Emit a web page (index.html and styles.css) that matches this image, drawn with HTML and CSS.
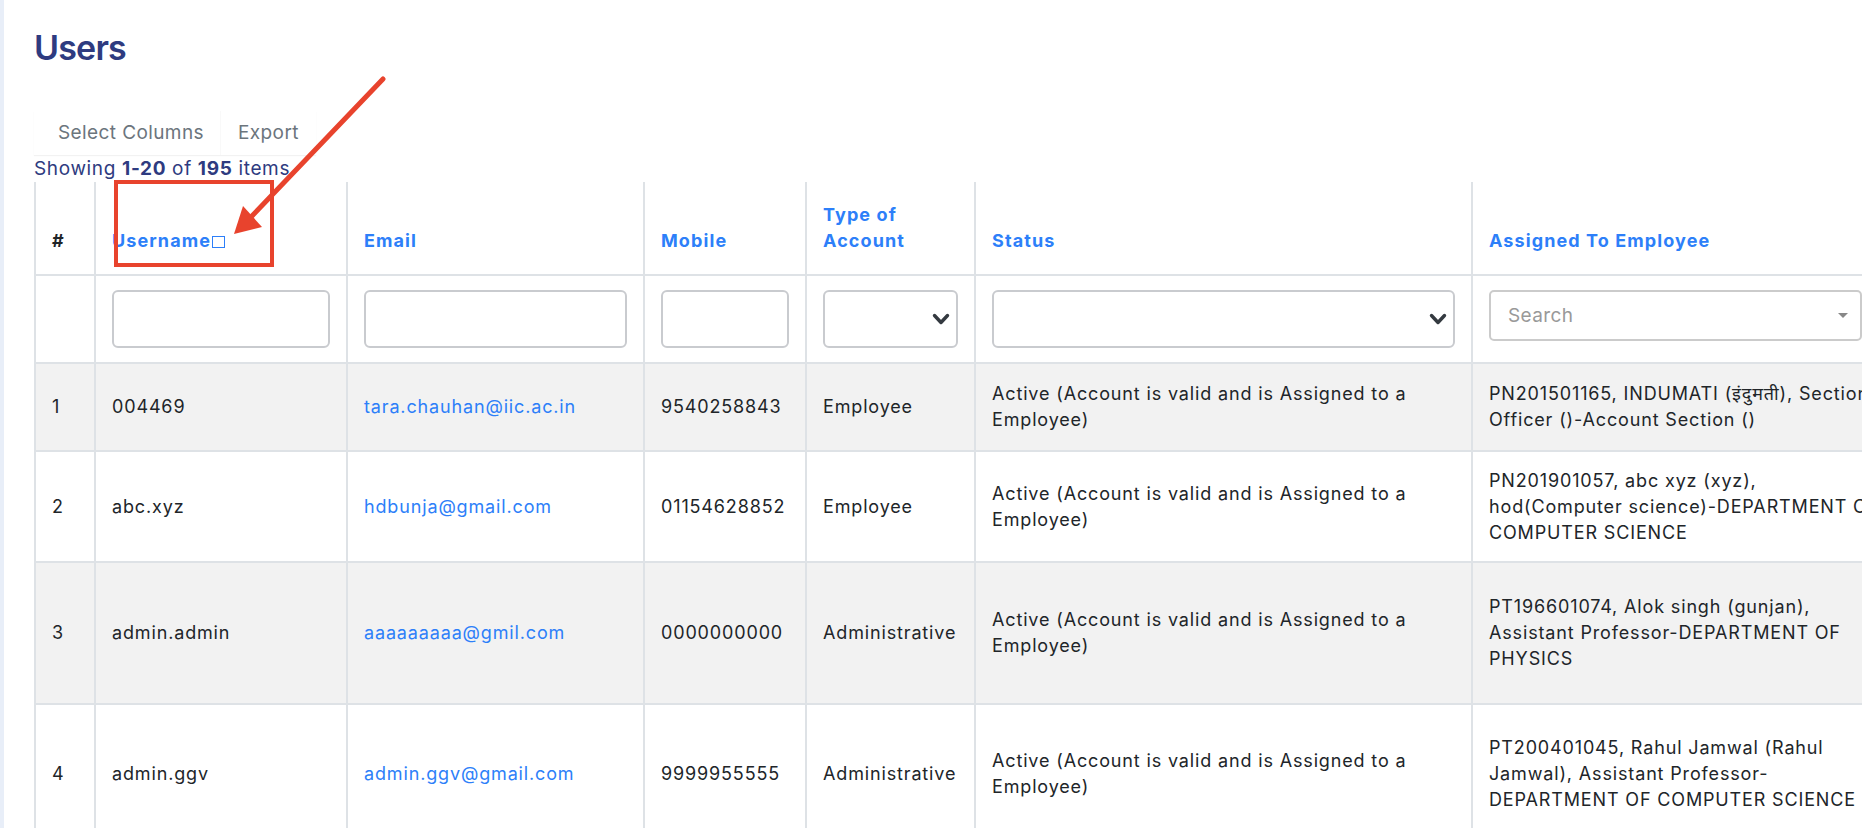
FILE: index.html
```html
<!DOCTYPE html>
<html lang="en">
<head>
<meta charset="utf-8">
<title>Users</title>
<link rel="stylesheet" href="styles.css">
</head>
<body>
<div class="layout">
  <aside class="rail"></aside>
  <main class="main">
    <h1 class="title">Users</h1>
    <div class="toolbar">
      <div class="btn-group">
        <button class="tool-btn" type="button">Select Columns</button>
        <button class="tool-btn" type="button">Export</button>
      </div>
    </div>
    <div class="summary">Showing <b>1-20</b> of <b>195</b> items.</div>
    <div class="table-wrap">
      <table class="grid">
        <thead>
          <tr class="head-row">
            <th class="c-num">#</th>
            <th class="c-user"><a class="sort">Username<span class="tofu"></span></a></th>
            <th class="c-email"><a class="sort">Email</a></th>
            <th class="c-mobile"><a class="sort">Mobile</a></th>
            <th class="c-type"><a class="sort">Type of Account</a></th>
            <th class="c-status"><a class="sort">Status</a></th>
            <th class="c-assigned"><a class="sort">Assigned To Employee</a></th>
          </tr>
          <tr class="filter-row">
            <td></td>
            <td><input class="field" type="text"></td>
            <td><input class="field" type="text"></td>
            <td><input class="field" type="text"></td>
            <td><div class="field select"><svg class="chev" viewBox="0 0 18 12" width="18" height="12"><path d="M2.5 2.5l6.5 7 6.5-7" fill="none" stroke="#343a40" stroke-width="3.4" stroke-linecap="round" stroke-linejoin="round"/></svg></div></td>
            <td><div class="field select"><svg class="chev" viewBox="0 0 18 12" width="18" height="12"><path d="M2.5 2.5l6.5 7 6.5-7" fill="none" stroke="#343a40" stroke-width="3.4" stroke-linecap="round" stroke-linejoin="round"/></svg></div></td>
            <td><div class="search-box"><span class="placeholder">Search</span><span class="caret"></span></div></td>
          </tr>
        </thead>
        <tbody>
          <tr class="row-1 striped">
            <td>1</td>
            <td>004469</td>
            <td><a class="mail">tara.chauhan@iic.ac.in</a></td>
            <td>9540258843</td>
            <td>Employee</td>
            <td>Active (Account is valid and is Assigned to a Employee)</td>
            <td class="assigned">PN201501165, INDUMATI (इंदुमती), Section<br>Officer ()-Account Section ()</td>
          </tr>
          <tr class="row-2">
            <td>2</td>
            <td>abc.xyz</td>
            <td><a class="mail">hdbunja@gmail.com</a></td>
            <td>01154628852</td>
            <td>Employee</td>
            <td>Active (Account is valid and is Assigned to a Employee)</td>
            <td class="assigned">PN201901057, abc xyz (xyz),<br>hod(Computer science)-DEPARTMENT OF<br>COMPUTER SCIENCE</td>
          </tr>
          <tr class="row-3 striped">
            <td>3</td>
            <td>admin.admin</td>
            <td><a class="mail">aaaaaaaaa@gmil.com</a></td>
            <td>0000000000</td>
            <td>Administrative</td>
            <td>Active (Account is valid and is Assigned to a Employee)</td>
            <td class="assigned">PT196601074, Alok singh (gunjan),<br>Assistant Professor-DEPARTMENT OF<br>PHYSICS</td>
          </tr>
          <tr class="row-4">
            <td>4</td>
            <td>admin.ggv</td>
            <td><a class="mail">admin.ggv@gmail.com</a></td>
            <td>9999955555</td>
            <td>Administrative</td>
            <td>Active (Account is valid and is Assigned to a Employee)</td>
            <td class="assigned">PT200401045, Rahul Jamwal (Rahul<br>Jamwal), Assistant Professor-<br>DEPARTMENT OF COMPUTER SCIENCE</td>
          </tr>
        </tbody>
      </table>
    </div>
  </main>
</div>
<svg class="annotation" width="1862" height="828" viewBox="0 0 1862 828">
  <rect x="116" y="182" width="156" height="83" fill="none" stroke="#e8432d" stroke-width="4"/>
  <line x1="383" y1="79" x2="252" y2="216" stroke="#e8432d" stroke-width="5" stroke-linecap="round"/>
  <polygon points="234,234 243,206 262,227" fill="#e8432d"/>
</svg>
</body>
</html>
```

FILE: styles.css
```css
* { box-sizing: border-box; }

html, body {
  margin: 0;
  padding: 0;
  background: #ffffff;
  overflow: hidden;
}

body {
  font-family: Inter, "Noto Sans", "Liberation Sans", sans-serif;
  font-size: 18px;
  letter-spacing: 0.75px;
  color: #212529;
  width: 1862px;
  height: 828px;
}

.layout {
  display: flex;
  height: 828px;
}

.rail {
  flex: 0 0 4px;
  background: #e8eef8;
}

.main {
  flex: 1 1 auto;
  min-width: 0;
  padding: 25px 0 0 30px;
  overflow: hidden;
}

.title {
  margin: 0;
  font-size: 34px;
  line-height: 46px;
  font-weight: 600;
  color: #2e3b80;
  letter-spacing: -0.8px;
}

.toolbar {
  margin-top: 40px;
  display: flex;
}

.btn-group {
  display: flex;
  box-shadow: 0 1px 1px rgba(0, 0, 0, 0.05);
  padding-left: 7px;
}

.tool-btn {
  font-family: inherit;
  font-size: 19px;
  letter-spacing: 0.4px;
  color: #6c757d;
  background: transparent;
  border: 0;
  padding: 0 17px;
  height: 44px;
  line-height: 44px;
}

.tool-btn + .tool-btn {
  box-shadow: -1px 0 0 rgba(0, 0, 0, 0.025);
}

.summary {
  font-size: 19px;
  letter-spacing: 0.65px;
  line-height: 27px;
  color: #2e3b80;
}

.summary b {
  font-weight: 700;
}

.table-wrap {
  overflow: hidden;
}

.grid {
  border-collapse: separate;
  border-spacing: 0;
  table-layout: fixed;
  width: 1846px;
}

.grid th,
.grid td {
  border-right: 2px solid #dee2e6;
  border-bottom: 2px solid #dee2e6;
  padding: 0 16px;
  line-height: 26px;
  text-align: left;
  white-space: normal;
  overflow: hidden;
}

.grid tr > :first-child {
  border-left: 2px solid #dee2e6;
}

.c-num { width: 62px; }
.c-user { width: 252px; }
.c-email { width: 297px; }
.c-mobile { width: 162px; }
.c-type { width: 169px; }
.c-status { width: 497px; }
.c-assigned { width: 407px; }

.head-row { height: 94px; }

.head-row th {
  vertical-align: bottom;
  padding-bottom: 20px;
  font-weight: 700;
  letter-spacing: 1.1px;
  color: #212529;
}

.sort {
  color: #2d7ff9;
  text-decoration: none;
}

.tofu {
  display: inline-block;
  width: 13px;
  height: 12px;
  border: 1.5px solid #2d7ff9;
  margin-left: 1px;
  vertical-align: -1px;
}

.filter-row { height: 88px; }

.filter-row td {
  vertical-align: top;
  padding-top: 14px;
}

.field {
  display: block;
  width: 100%;
  height: 58px;
  border: 2px solid #c9cbcf;
  border-radius: 6px;
  background: #fff;
  font-family: inherit;
  font-size: 18px;
}

.select {
  display: flex;
  align-items: center;
  justify-content: flex-end;
  padding-right: 6px;
}

.chev {
  display: block;
}

.search-box {
  display: flex;
  align-items: center;
  justify-content: space-between;
  height: 51px;
  border: 2px solid #cbcbcb;
  border-radius: 5px;
  padding: 0 12px 0 17px;
  white-space: nowrap;
}

.placeholder {
  color: #999999;
  font-size: 19px;
  letter-spacing: 0.4px;
}

.caret {
  width: 0;
  height: 0;
  border-left: 5px solid transparent;
  border-right: 5px solid transparent;
  border-top: 5px solid #888888;
}

tbody td {
  vertical-align: middle;
  letter-spacing: 0.85px;
}

.striped td { background: #f2f2f2; }

.row-1 { height: 88px; }
.row-2 { height: 111px; }
.row-3 { height: 142px; }
.row-4 { height: 140px; }

.mail {
  color: #2d7ff9;
  text-decoration: none;
}

.grid .assigned {
  white-space: nowrap;
}

.annotation {
  position: absolute;
  top: 0;
  left: 0;
  pointer-events: none;
}
```
